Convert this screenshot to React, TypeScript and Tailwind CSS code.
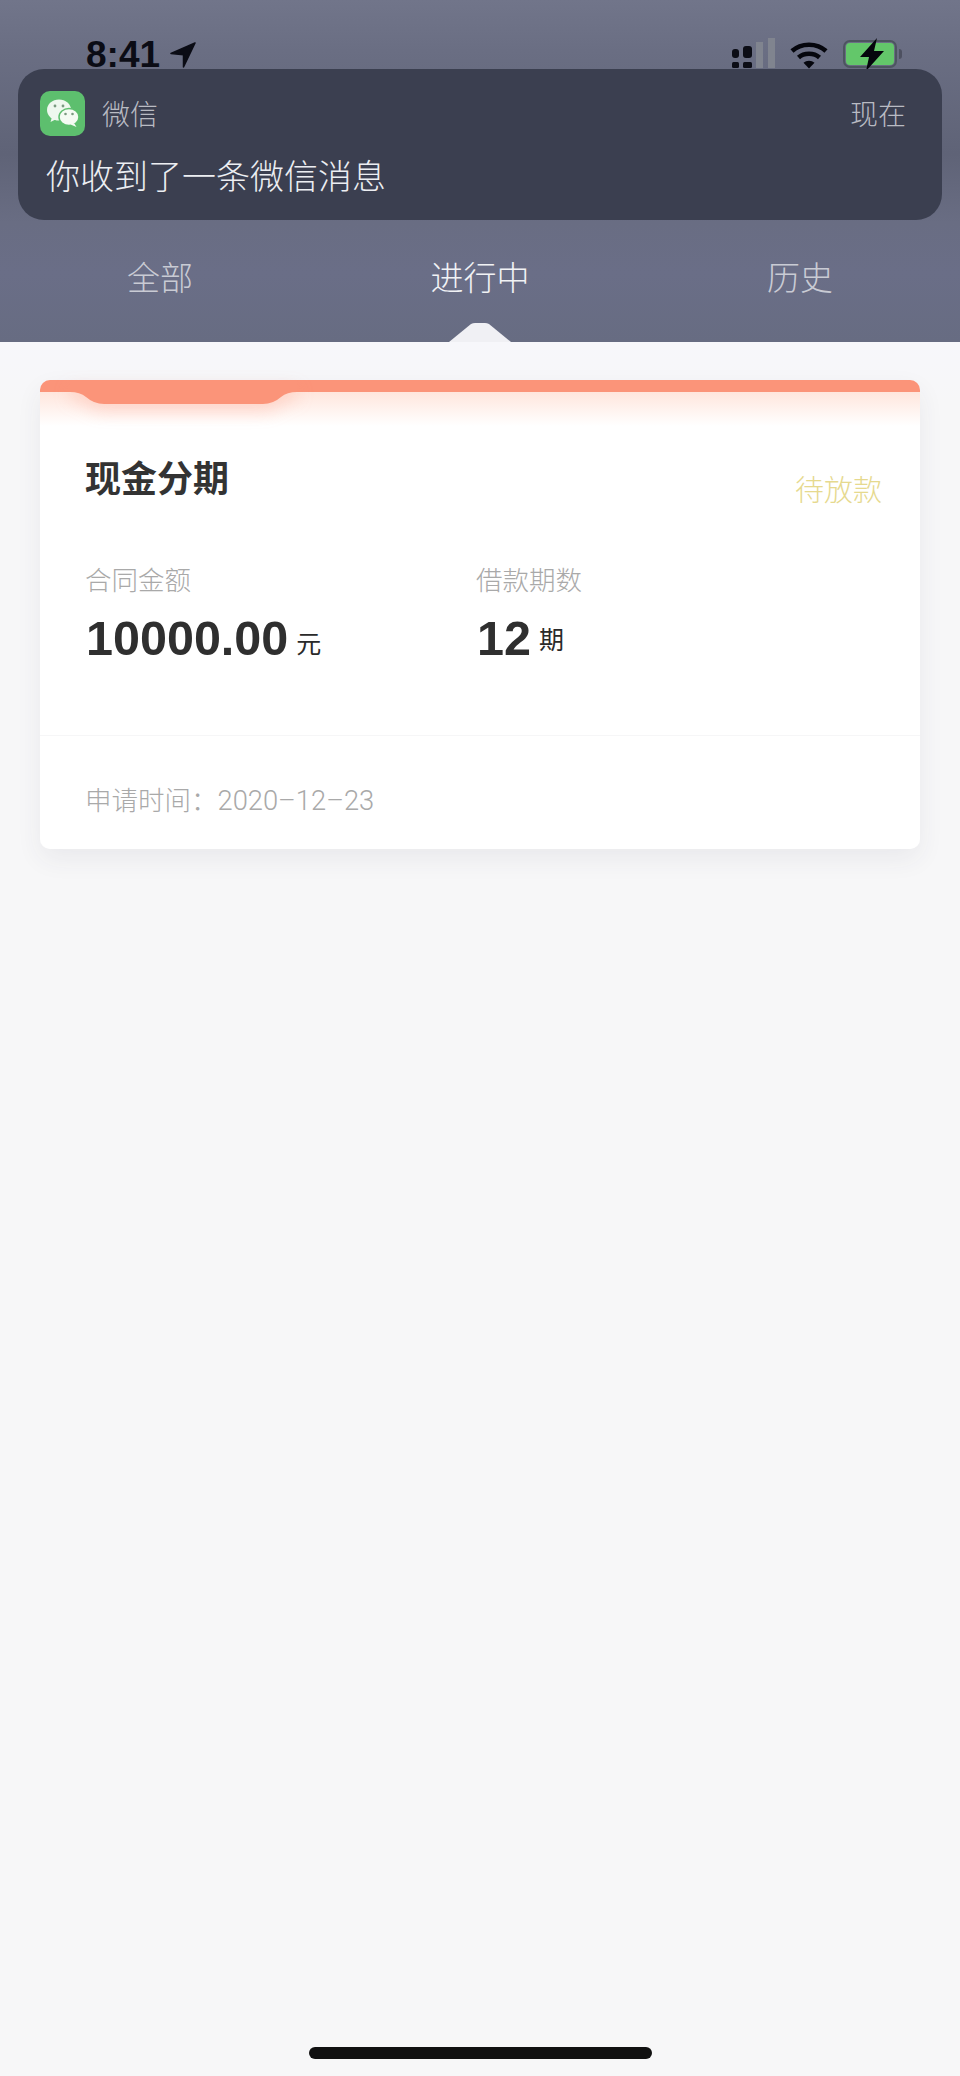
const cjk = "font-['Noto_Sans_CJK_SC','Noto_Sans',sans-serif]";

function WeChatIcon() {
  return (
    <svg width="45" height="45" viewBox="0 0 45 45" className="shrink-0">
      <rect width="45" height="45" rx="10" fill="#5dbf6e" />
      <ellipse cx="19" cy="19" rx="12" ry="10.5" fill="#eef8ee" />
      <path d="M12 26l-1.5 5 6-3z" fill="#eef8ee" />
      <ellipse cx="29" cy="26" rx="10" ry="8.5" fill="#f4fbf3" stroke="#5dbf6e" strokeWidth="1.5" />
      <path d="M34 32l2.5 4-6-2.5z" fill="#f4fbf3" />
      <circle cx="15" cy="15" r="1.4" fill="#7a9a80" />
      <circle cx="23" cy="15" r="1.4" fill="#7a9a80" />
      <circle cx="25.5" cy="23" r="1.3" fill="#7a9a80" />
      <circle cx="32.5" cy="23" r="1.3" fill="#7a9a80" />
    </svg>
  );
}

function StatusIcons() {
  return (
    <div className="flex items-start">
      {/* cell bars */}
      <svg width="46" height="34" viewBox="0 0 46 34" className="mt-[34px]">
        <rect x="0" y="15" width="7" height="9" rx="3" fill="#0c0d16" />
        <rect x="11" y="12" width="9" height="12" rx="3" fill="#0c0d16" />
        <rect x="0" y="28" width="7" height="6" rx="1.500" fill="#0c0d16" />
        <rect x="11" y="28" width="9" height="6" rx="1.500" fill="#0c0d16" />
        <rect x="24" y="8" width="7" height="26" fill="#80848f" />
        <rect x="36" y="4" width="7" height="30" fill="#80848f" />
      </svg>
      {/* wifi */}
      <svg width="38" height="29" viewBox="0 0 38 29" className="ml-[12px] mt-[40px]" fill="none" stroke="#05060d" strokeWidth="4.500">
        <path d="M2 11C11 2.500 27 2.500 36 11" />
        <path d="M8.500 17.500C14 12.500 24 12.500 29.500 17.500" />
        <path d="M13.500 22.800C16.500 20 21.500 20 24.500 22.800l-5.500 5.700z" fill="#05060d" stroke="none" />
      </svg>
      {/* battery */}
      <div className="relative ml-[15px] mt-[40px] flex h-[28px]">
        <div className="h-[28px] w-[54px] rounded-[7px] border-[2px] border-[#4d5560] p-[1px]">
          <div className="h-full w-full rounded-[4px] bg-[#63c76a]" />
        </div>
        <div className="ml-[2px] mt-[9px] h-[10px] w-[3px] rounded-r-sm bg-[#4d5060]" />
        <svg width="30" height="33" viewBox="0 0 30 33" className="absolute left-[14px] -top-[2px]">
          <path d="M20 0L3 19h9l-3 14L27 13h-10z" fill="#05060d" />
        </svg>
      </div>
    </div>
  );
}

function Stat({ label, value, unit, unitClass }: { label: string; value: string; unit: string; unitClass: string }) {
  return (
    <div>
      <div className={`${cjk} -ml-[1px] text-[26.500px] leading-[36px] font-light text-[#a9a9a9]`}>{label}</div>
      <div className="mt-[13px] flex h-[56px] items-baseline">
        <span className="font-['Liberation_Sans',Arial,sans-serif] text-[48.500px] leading-[56px] font-bold text-[#2f2f2f]">{value}</span>
        <span className={`${cjk} ml-[8px] text-[25px] leading-none text-[#2a2a2a] ${unitClass}`}>{unit}</span>
      </div>
    </div>
  );
}

export default function App() {
  return (
    <div className={`${cjk} flex min-h-[2076px] w-[960px] flex-col overflow-hidden bg-[#f7f7f8]`}>
      {/* blurred header */}
      <header className="relative h-[342px] bg-[linear-gradient(180deg,#71758a_0%,#6a6e83_15%,#5f6377_45%,#696d83_65%,#6a6e87_80%,#676c82_100%)]">
        <div className="flex h-[69px] items-start justify-between pl-[86px] pr-[58px]">
          <div className="flex items-start pt-[36px]">
            <span className="font-['Liberation_Sans',Arial,sans-serif] text-[37px] leading-[37px] font-bold text-[#0b0c15]">8:41</span>
            <svg width="26" height="26" viewBox="0 0 26 26" className="ml-[10px] mt-[6px]">
              <path d="M25 1L1 11.500l12.500 1.200L13.500 25z" fill="#0b0c15" stroke="#0b0c15" strokeWidth="1.500" strokeLinejoin="round" />
            </svg>
          </div>
          <StatusIcons />
        </div>

        {/* notification */}
        <div className="relative mx-[18px] h-[151px] rounded-[26px] bg-[#3b3f50] pl-[22px] pr-[36px] pt-[22px]">
          <div className="flex items-center justify-between">
            <div className="flex items-center gap-[17px]">
              <WeChatIcon />
              <span className="mb-[2px] text-[28px] leading-[40px] font-light text-[#b9bbc3]">微信</span>
            </div>
            <span className="mb-[2px] text-[28px] leading-[40px] font-light text-[#b9bbc3]">现在</span>
          </div>
          <p className="ml-[6px] mt-[15px] text-[34px] leading-[48px] font-light text-[#eceef2]">你收到了一条微信消息</p>
        </div>

        {/* tabs */}
        <nav className="mt-[32px] grid grid-cols-3 text-center text-[33px] leading-[48px] font-light">
          <span className="text-[#c9cbd4]">全部</span>
          <span className="text-[#f1f2f5]">进行中</span>
          <span className="text-[#c9cbd4]">历史</span>
        </nav>

        {/* active tab marker */}
        <svg width="62" height="20" viewBox="0 0 62 20" className="absolute bottom-0 left-[449px]">
          <path d="M0 20L22 2Q24 1 26 1h10Q38 1 40 2L62 20z" fill="#f0f0f4" />
        </svg>
      </header>

      <main className="flex flex-1 flex-col bg-[linear-gradient(180deg,#f7f7fb_0px,#f7f7f8_60px)] px-[40px] pt-[38px]">
        {/* contract card */}
        <section className="relative rounded-[10px] bg-[linear-gradient(180deg,#ffe6dd_12px,#ffffff_46px)] shadow-[0_10px_26px_rgba(60,60,80,0.07)]">
          <div className="absolute inset-x-0 top-0 h-[12px] rounded-t-[10px] bg-[#fb9479]" />
          <svg width="227" height="24" viewBox="0 0 227 24" className="absolute left-[30px] top-0 drop-shadow-[0_8px_8px_rgba(251,148,121,0.28)]">
            <path d="M0 12q10 0 16 5q8 7 18 7H193q10 0 18-7q6-5 16-5V0H0z" fill="#fb9479" />
          </svg>

          <div className="pb-[69px] pl-[46px] pr-[38px] pt-[71px]">
            <div className="flex items-start justify-between">
              <h2 className="-ml-[1px] text-[36px] leading-[50px] font-bold text-[#333333]">现金分期</h2>
              <span className="mt-[17px] text-[29px] leading-[40px] font-light text-[#e6d98e]">待放款</span>
            </div>
            <div className="mt-[53px] grid grid-cols-[391px_1fr]">
              <Stat label="合同金额" value="10000.00" unit="元" unitClass="-translate-y-[2px]" />
              <Stat label="借款期数" value="12" unit="期" unitClass="-translate-y-[6px]" />
            </div>
          </div>

          <div className="border-t border-[#f6f6f7] pb-[28px] pl-[46px] pt-[45px] leading-[36px] font-light text-[#a9a9a9]">
            <span className="-ml-[1px] text-[26.500px]">申请时间：</span>
            <span className="font-['Roboto',sans-serif] text-[27.300px]">2020–12–23</span>
          </div>
        </section>

        {/* home indicator */}
        <div className="mb-[17px] mt-auto h-[12px] w-[343px] self-center rounded-full bg-[#111111]" />
      </main>
    </div>
  );
}
